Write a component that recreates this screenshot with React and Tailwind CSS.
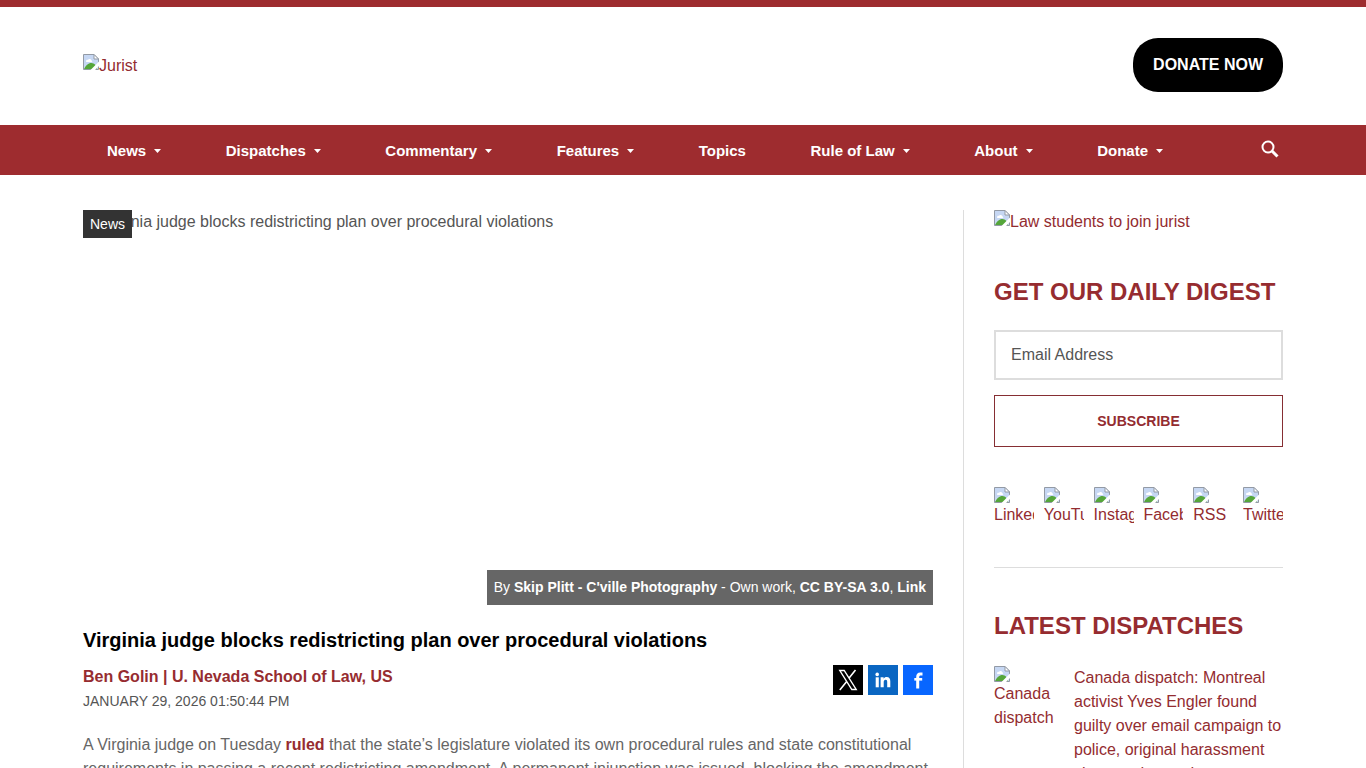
import React from "react";

const navItems = [
    { label: "News", hasMenu: true },
    { label: "Dispatches", hasMenu: true },
    { label: "Commentary", hasMenu: true },
    { label: "Features", hasMenu: true },
    { label: "Topics", hasMenu: false },
    { label: "Rule of Law", hasMenu: true },
    { label: "About", hasMenu: true },
    { label: "Donate", hasMenu: true },
];

const socialLinks = ["LinkedIn", "YouTube", "Instagram", "Facebook", "RSS", "Twitter"];

// Placeholder glyph for pictures that are not available
const MissingImage = () => (
    <svg width="16" height="16" viewBox="0 0 16 16" aria-hidden="true" className="shrink-0">
        <path d="M0.5 0.5H11L15.5 5V15.5H0.5Z" fill="#c6d7f3" />
        <path d="M3 7.5C3 6 4.2 5.5 5 6C5.5 4.5 8 4.5 8.5 6.5C9.5 6.5 9.5 8 8.5 8H3.5Z" fill="#fff" />
        <path d="M1 15C3 11.5 5 9 8.5 9C11.5 9 13 11 14 15Z" fill="#55a63a" />
        <path d="M0.5 15.5V0.5H11L15.5 5V15.5Z" fill="none" stroke="#939aa5" />
        <path d="M11 0.5V5H15.5Z" fill="#fff" stroke="#939aa5" />
        <path d="M16 7.5L7.5 16H12L16 12Z" fill="#fff" />
    </svg>
);

const Caret = () => (
    <svg width="7" height="4" viewBox="0 0 7 4" aria-hidden="true">
        <path d="M0 0H7L3.5 4Z" fill="#fff" />
    </svg>
);

const SearchIcon = () => (
    <svg width="18" height="18" viewBox="0 0 18 18" fill="none" stroke="#fff" aria-hidden="true">
        <circle cx="7" cy="7" r="5.5" strokeWidth="2" />
        <path d="M11 11L16.5 16.5" strokeWidth="3" />
    </svg>
);

const ShareButtons = () => (
    <div className="flex gap-[5px]">
        <a href="#x" aria-label="Share on X" className="w-[30px] h-[30px] bg-black">
            <svg width="30" height="30" viewBox="0 0 30 30" fill="none" stroke="#fff" aria-hidden="true">
                <path d="M6.8 5.5H11.2L23.2 24.5H18.8Z" strokeWidth="1.4" />
                <path d="M22.5 5L16.1 13M13.7 16.4L6.8 25" strokeWidth="1.6" />
            </svg>
        </a>
        <a href="#linkedin" aria-label="Share on LinkedIn" className="w-[30px] h-[30px] bg-[#0a66c2]">
            <svg width="30" height="30" viewBox="0 0 30 30" fill="#fff" aria-hidden="true">
                <circle cx="9.2" cy="9.4" r="1.8" />
                <path d="M7.7 12.3H10.8V22.3H7.7Z" />
                <path d="M12.6 12.3H15.6V13.7C16.2 12.6 17.3 12 18.6 12C21.4 12 22.3 13.8 22.3 16.3V22.3H19.2V17C19.2 15.6 18.8 14.7 17.6 14.7C16.3 14.7 15.7 15.7 15.7 17V22.3H12.6Z" />
            </svg>
        </a>
        <a href="#facebook" aria-label="Share on Facebook" className="w-[30px] h-[30px] bg-[#0866ff]">
            <svg width="30" height="30" viewBox="0 0 30 30" fill="none" stroke="#fff" aria-hidden="true">
                <path d="M14.7 23.5V12C14.7 9.9 15.7 9 17.2 9H19.5" strokeWidth="3" />
                <path d="M11.3 14.3H19.2" strokeWidth="2.6" />
            </svg>
        </a>
    </div>
);

const Header = () => (
    <header>
        <div className="border-t-[7px] border-[#9e2c2f]">
            <div className="max-w-[1200px] h-[118px] mx-auto flex items-center justify-between">
                <a href="#home" className="flex items-start text-[#932c30] leading-6">
                    <MissingImage />
                    Jurist
                </a>
                <a href="#donate" className="px-5 py-[15px] mb-[2px] rounded-[25px] bg-black text-white font-bold leading-6">
                    DONATE NOW
                </a>
            </div>
        </div>
        <div className="bg-[#9e2c2f]">
            <div className="max-w-[1200px] h-[50px] mx-auto flex items-center justify-between">
                <nav className="flex-1 flex justify-between pt-[2px] pl-6 pr-[98px]">
                    {navItems.map((item) => (
                        <a
                            key={item.label}
                            href="#section"
                            className="flex items-center gap-2 text-white text-[15px] leading-6 font-bold whitespace-nowrap"
                        >
                            {item.label}
                            {item.hasMenu && <Caret />}
                        </a>
                    ))}
                </nav>
                <button type="button" aria-label="Search" className="pr-1 pb-[2px]">
                    <SearchIcon />
                </button>
            </div>
        </div>
    </header>
);

const Article = () => (
    <article className="flex-1 min-w-0 pr-[30px] border-r border-[#ddd]">
        <div className="relative h-[395px] leading-6 text-[#555]">
            <div className="flex">
                <MissingImage />
                Virginia judge blocks redistricting plan over procedural violations
            </div>
            <a href="#news" className="absolute left-0 top-0 h-7 px-[7px] leading-7 bg-[#333] text-white text-sm">
                News
            </a>
            <div className="absolute right-0 bottom-0 h-[35px] px-[7px] leading-[35px] bg-[#666] text-white text-sm">
                By <a href="#author" className="font-bold">Skip Plitt - C'ville Photography</a> - Own work,{" "}
                <a href="#licence" className="font-bold">CC BY-SA 3.0</a>, <a href="#link" className="font-bold">Link</a>
            </div>
        </div>
        <h1 className="mt-5 text-xl leading-[30px] font-bold text-black">
            Virginia judge blocks redistricting plan over procedural violations
        </h1>
        <div className="mt-[10px] flex justify-between items-start">
            <div>
                <a href="#author" className="block leading-6 font-bold text-[#962c30]">
                    Ben Golin | U. Nevada School of Law, US
                </a>
                <div className="text-sm leading-6 text-[#555]">JANUARY 29, 2026 01:50:44 PM</div>
            </div>
            <ShareButtons />
        </div>
        <p className="mt-5 leading-6 text-[#666]">
            A Virginia judge on Tuesday <a href="#ruled" className="font-bold text-[#962c30]">ruled</a> that the
            state’s legislature violated its own procedural rules and state constitutional requirements in passing a
            recent redistricting amendment. A permanent injunction was issued, blocking the amendment
        </p>
    </article>
);

const Sidebar = () => (
    <aside className="w-[319px] shrink-0 pl-[30px] text-[#932c30]">
        <a href="#join" className="flex leading-6">
            <MissingImage />
            Law students to join jurist
        </a>
        <h2 className="mt-10 text-2xl leading-9 font-bold text-[#962c30]">GET OUR DAILY DIGEST</h2>
        <form className="mt-5" onSubmit={(e) => e.preventDefault()}>
            <input
                type="email"
                aria-label="Email Address"
                placeholder="Email Address"
                className="block w-full h-[50px] px-[15px] border-2 border-[#ddd] text-[#555] placeholder:text-[#555]"
            />
            <button
                type="submit"
                className="mt-[15px] w-full h-[52px] border border-[#862e33] text-sm font-bold"
            >
                SUBSCRIBE
            </button>
        </form>
        <div className="mt-10 pb-10 flex justify-between border-b border-[#ddd]">
            {socialLinks.map((name) => (
                <a key={name} href="#social" className="w-10 h-10 overflow-hidden leading-6">
                    <MissingImage />
                    {name}
                </a>
            ))}
        </div>
        <h2 className="mt-10 text-2xl leading-9 font-bold text-[#962c30]">LATEST DISPATCHES</h2>
        <a href="#dispatch" className="mt-[22px] flex gap-5 leading-6">
            <span className="w-[60px] shrink-0">
                <MissingImage />
                Canada dispatch
            </span>
            <span>
                Canada dispatch: Montreal activist Yves Engler found guilty over email campaign to police, original
                harassment charges dropped
            </span>
        </a>
    </aside>
);

const App = () => {
    return (
        <div className="min-h-screen bg-white text-base font-['Liberation_Sans',Arial,sans-serif]">
            <Header />
            <main className="max-w-[1200px] mx-auto pt-[35px] flex">
                <Article />
                <Sidebar />
            </main>
        </div>
    );
};

export default App;
